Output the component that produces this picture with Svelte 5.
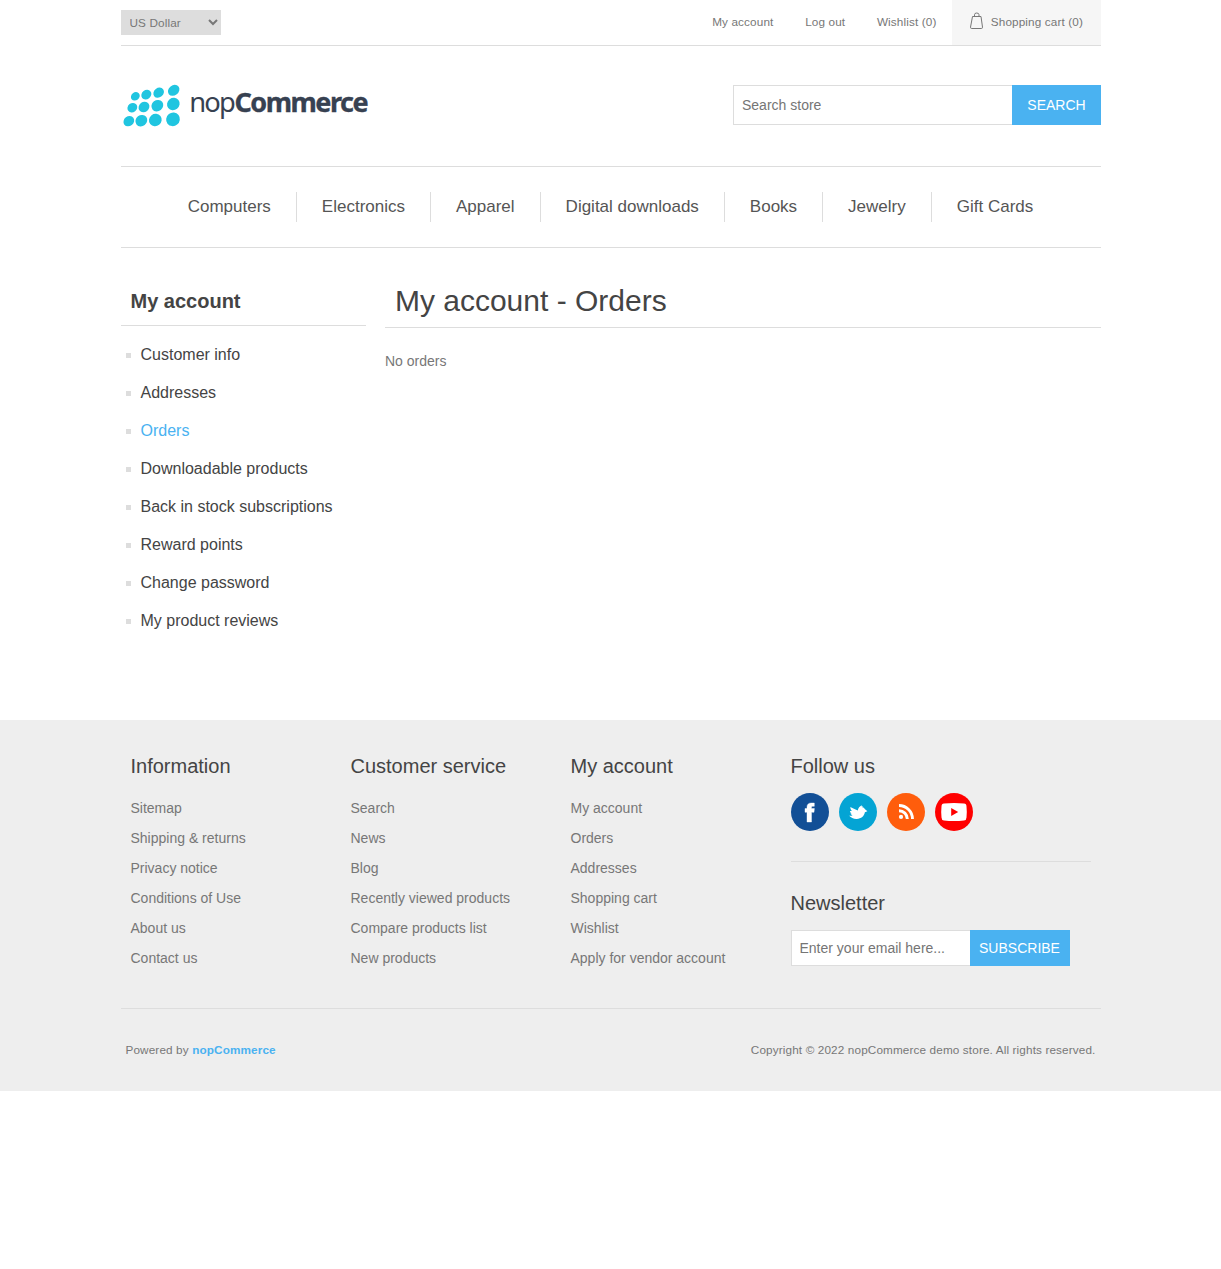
<script>
  const headerLinks = ['My account', 'Log out', 'Wishlist (0)'];
  const menu = ['Computers', 'Electronics', 'Apparel', 'Digital downloads', 'Books', 'Jewelry', 'Gift Cards'];
  const accountLinks = [
    'Customer info', 'Addresses', 'Orders', 'Downloadable products',
    'Back in stock subscriptions', 'Reward points', 'Change password', 'My product reviews'
  ];
  const footerBlocks = [
    { title: 'Information', links: ['Sitemap', 'Shipping & returns', 'Privacy notice', 'Conditions of Use', 'About us', 'Contact us'] },
    { title: 'Customer service', links: ['Search', 'News', 'Blog', 'Recently viewed products', 'Compare products list', 'New products'] },
    { title: 'My account', links: ['My account', 'Orders', 'Addresses', 'Shopping cart', 'Wishlist', 'Apply for vendor account'] }
  ];
  const dots = [
    [59.5, 64, 14, 12], [92.5, 59, 16, 13.5], [129.5, 53, 17, 14], [174.5, 46, 18.5, 15],
    [50.5, 98, 15.5, 13.5], [85.5, 96, 17, 15], [125.5, 92, 18.5, 16.5], [173.5, 87, 19.5, 18],
    [40, 138.5, 17, 14.5], [77.5, 137, 18.5, 16.5], [119.5, 135, 19.5, 18.5], [172.5, 133, 21, 20]
  ];
</script>

<div class="page">
  <header>
    <div class="upper">
      <select aria-label="Currency"><option>US Dollar</option></select>
      <nav class="user-links">
        {#each headerLinks as link}<a href="#top">{link}</a>{/each}
        <a href="#cart" class="cart">
          <svg width="14" height="18" viewBox="0 0 14 18" fill="none" stroke="#777">
            <path d="M2.500 4.500h8.500l1.500 10.700q.1 1.300-1.200 1.300H1.700Q.4 16.500.5 15.200Z" />
            <path d="M4.500 4.500V2.700Q4.500 1 6.700 1t2.300 1.700v1.800" />
          </svg>
          <span>Shopping cart (0)</span>
        </a>
      </nav>
    </div>
    <div class="lower">
      <svg class="logo" viewBox="16.5 15 750 150">
        {#each dots as [x, y, rx, ry]}
          <ellipse cx={x} cy={y} {rx} {ry} transform={`rotate(-38 ${x} ${y})`} fill="#20c5e0" />
        {/each}
        <text x="221" y="111" font-size="82" textLength="140" lengthAdjust="spacing">nop</text>
        <text class="bold" x="357" y="111" font-size="81" textLength="402" lengthAdjust="spacing">Commerce</text>
      </svg>
      <form class="search">
        <input placeholder="Search store" />
        <button type="button">SEARCH</button>
      </form>
    </div>
  </header>

  <nav class="menu">
    {#each menu as item}<a href="#menu">{item}</a>{/each}
  </nav>

  <div class="columns">
    <aside>
      <h2>My account</h2>
      <ul>
        {#each accountLinks as link}
          <li><a href="#account" class:active={link === 'Orders'}>{link}</a></li>
        {/each}
      </ul>
    </aside>
    <main>
      <h1>My account - Orders</h1>
      <p>No orders</p>
    </main>
  </div>
</div>

<footer>
  <div class="footer-inner">
    <div class="footer-upper">
      {#each footerBlocks as block}
        <section class="block">
          <h3>{block.title}</h3>
          <ul>
            {#each block.links as link}<li><a href="#footer">{link}</a></li>{/each}
          </ul>
        </section>
      {/each}
      <section class="follow">
        <h3>Follow us</h3>
        <div class="social">
          <svg viewBox="0 0 38 38"><circle cx="19" cy="19" r="19" fill="#124f96" /><path fill="#fff" d="M16 29V19.300H14v-3.800h2V14c0-2.800 1.700-4 4.400-4h2.900v3.300h-1.500c-.9 0-1.300.4-1.300 1.200v1h2.900l-.4 3.800h-2.500V29Z" stroke="#fff" stroke-width=".4" /></svg>
          <svg viewBox="0 0 38 38"><circle cx="19" cy="19" r="19" fill="#04a4d4" /><path fill="#fff" d="M9.700 22.600q2.200.6 3.800-.3-1.600-.5-2.100-1.700l1.200-.2q-1.500-.9-1.700-2.500l1.900.2q-1.600-1.900-1.500-4.200 3.500 1.500 7.500 3.500 .6-3.600 4-5.200l-.1 1.300 1.200-.5-.6 1.200q1.900.2 2.500 1.900l2.600 2.100-2.500 1c-.6 3.600-3.600 6.600-8.100 6.700-3.100.1-5.800-.9-7.600-3.100Z" /></svg>
          <svg viewBox="0 0 38 38"><circle cx="19" cy="19" r="19" fill="#ff5d0c" /><g fill="none" stroke="#fff" stroke-width="2.900"><path d="M12 12.500A13.500 13.500 0 0 1 25.500 26" /><path d="M12 17.700A8.300 8.300 0 0 1 20.300 26" /></g><circle cx="14" cy="23.900" r="2.100" fill="#fff" /></svg>
          <svg viewBox="0 0 38 38"><circle cx="19" cy="19" r="19" fill="#f00" /><path fill="#fff" d="M9 10.500q10-1.200 20 0 2.500.2 2.500 3 .6 5.500 0 11 0 2.600-2.500 2.900-10 1.100-20 0-2.500-.3-2.500-2.900-.6-5.500 0-11 0-2.800 2.500-3Z" /><path fill="#f00" d="m16.200 15 7 4-7 4Z" /></svg>
        </div>
        <div class="newsletter">
          <h3>Newsletter</h3>
          <form>
            <input placeholder="Enter your email here..." />
            <button type="button">SUBSCRIBE</button>
          </form>
        </div>
      </section>
    </div>
    <div class="footer-lower">
      <span>Powered by <a href="#nop">nopCommerce</a></span>
      <span>Copyright © 2022 nopCommerce demo store. All rights reserved.</span>
    </div>
  </div>
</footer>

<style>
  :global(body) {
    background: #fff;
    font: 14px "Liberation Sans", Arial, sans-serif;
    color: #777;
  }
  :global(*) { box-sizing: border-box; }
  a { color: inherit; text-decoration: none; }
  h1, h2, h3, p, ul { margin: 0; padding: 0; font-weight: 400; }
  ul { list-style: none; }
  input, button, select { font: inherit; margin: 0; border-radius: 0; outline: none; }

  .page, .footer-inner { width: 980px; margin: 0 auto; }

  .upper {
    display: flex;
    justify-content: space-between;
    height: 46px;
    border-bottom: 1px solid #ddd;
    font-size: 11.740px;
    letter-spacing: 0.130px;
  }
  select {
    width: 100px;
    height: 25px;
    margin-top: 10px;
    padding: 0 5px;
    border: 0;
    background: #ddd;
    color: #777;
    letter-spacing: inherit;
  }
  .user-links { display: flex; line-height: 44px; }
  .user-links a { padding: 0 15px; margin-left: 1.700px; }
  .user-links a:nth-child(3) { padding-right: 15.800px; }
  .user-links .cart {
    display: flex;
    gap: 7px;
    margin-left: 0;
    padding: 0 17.500px;
    background: #f6f6f6;
  }
  .cart svg { margin-top: 12px; }

  .lower {
    display: flex;
    justify-content: space-between;
    height: 120px;
    padding-top: 39px;
  }
  .logo { width: 250px; height: 50px; margin-top: -5px; }
  .logo text { font-family: "Noto Sans", sans-serif; fill: #374151; }
  .logo .bold { font-weight: 700; stroke: #374151; stroke-width: 1px; }

  form { display: flex; }
  input {
    border: 1px solid #ddd;
    border-right: 0;
    background: #fff;
    padding: 0 8px;
  }
  input::placeholder { color: #757575; opacity: 1; }
  button { padding: 0; border: 0; background: #4ab2f1; color: #fff; }
  .search { height: 40px; }
  .search input { width: 279px; padding-left: 8.500px; }
  .search button { width: 89px; padding-left: 1px; }

  .menu {
    display: flex;
    justify-content: center;
    padding: 25px 0;
    border-top: 1px solid #ddd;
    border-bottom: 1px solid #ddd;
    font-size: 17px;
    line-height: 30px;
    color: #555;
  }
  .menu a { padding: 0 25px; }
  .menu a + a { border-left: 1px solid #ddd; }

  .columns { display: flex; justify-content: space-between; height: 472px; padding-top: 30px; }
  aside { width: 245px; color: #444; }
  h2 {
    height: 48px;
    padding-left: 10px;
    border-bottom: 1px solid #ddd;
    font-size: 20px;
    font-weight: 700;
    line-height: 46px;
  }
  aside ul { padding: 10px 5px; font-size: 16px; }
  aside li { display: flex; align-items: center; gap: 10px; height: 38px; }
  aside li::before { content: ""; width: 5px; height: 5px; margin-top: 1px; background: #ddd; }
  .active { color: #4ab2f1; }
  main { width: 715.600px; }
  h1 {
    height: 50px;
    padding-left: 10px;
    border-bottom: 1px solid #ddd;
    color: #444;
    font-size: 30px;
    line-height: 46px;
  }
  main p { padding-top: 25px; }

  footer { height: 371px; background: #eee; }
  .footer-upper { display: flex; height: 289px; padding: 31px 10px 0; border-bottom: 1px solid #ddd; }
  h3 { color: #444; font-size: 20px; line-height: 30px; }
  .block { width: 220px; }
  .block ul { margin-top: 12px; line-height: 30px; }
  .follow { width: 300px; }
  .social { display: flex; gap: 10px; margin-top: 12px; }
  .social svg { width: 38px; height: 38px; }
  .newsletter { margin-top: 30px; padding-top: 26px; border-top: 1px solid #ddd; }
  .newsletter form { height: 36px; margin-top: 12px; }
  .newsletter input { width: 179px; }
  .newsletter button { width: 100px; }
  .footer-lower {
    display: flex;
    justify-content: space-between;
    padding: 33px 5px 0;
    font-size: 11.740px;
    letter-spacing: 0.130px;
    line-height: 16px;
  }
  .footer-lower a { color: #4ab2f1; font-weight: 700; }
</style>
